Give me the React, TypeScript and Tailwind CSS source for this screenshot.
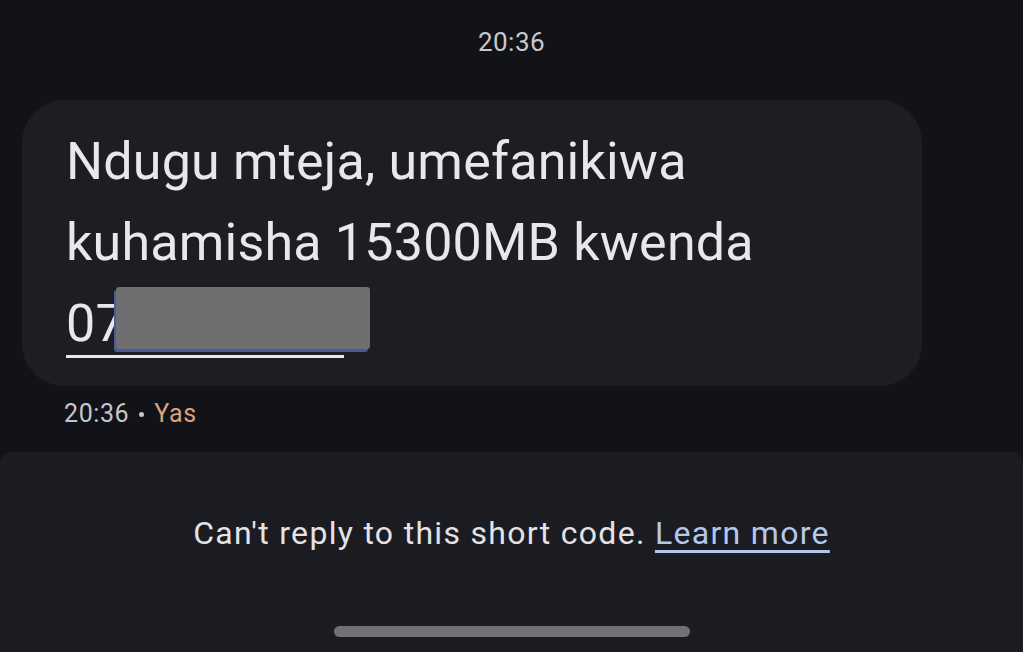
import React from "react";

export default function App() {
  return (
    <div
      className="w-[1023px] h-[652px] bg-[#121318] flex flex-col overflow-hidden"
      style={{ fontFamily: "Roboto, 'Noto Sans', sans-serif" }}
    >
      <div className="h-[100px] flex justify-center pt-[25px]">
        <span className="text-[26px] leading-[34px] tracking-[0.5px] text-[#c9c9cd]">20:36</span>
      </div>

      <div className="ml-[22px] w-[900px] h-[286px] rounded-[42px] bg-[#1d1e23] pl-[44px] pt-[21px] box-border">
        <div className="text-[52px] leading-[81px] tracking-[0.2px] text-[#e8e8eb]">
          <div>Ndugu mteja, umefanikiwa</div>
          <div>kuhamisha 15300MB kwenda</div>
          <div className="relative inline-block">
            <span className="inline-block w-[278px] border-b-[3px] border-[#e8e8eb] leading-[62px]">07</span>
            <div className="absolute left-[50px] top-[4px] w-[254px] h-[62px] rounded-[3px] bg-[#6f6f71] shadow-[-2px_3px_0_#4a5a9a]" />
          </div>
        </div>
      </div>

      <div className="flex items-center pl-[64px] mt-[13px] gap-[10px] text-[25px] leading-[30px] tracking-[0.6px]">
        <span className="text-[#c6c6ca]">20:36</span>
        <span className="w-[5px] h-[5px] rounded-full bg-[#c6c6ca]" />
        <span className="text-[#dba27f]">Yas</span>
      </div>

      <div className="flex-1 mt-[23px] bg-[#1b1c21] rounded-t-[10px] flex flex-col items-center">
        <div className="mt-[61px] text-[32px] leading-[40px] tracking-[1.3px] text-[#e3e3e6]">
          Can't reply to this short code.{" "}
          <span className="text-[#b4c8ee] underline decoration-[3px] underline-offset-[6px]">Learn more</span>
        </div>
        <div className="mt-[73px] w-[356px] h-[11px] rounded-full bg-[#717175]" />
      </div>
    </div>
  );
}
